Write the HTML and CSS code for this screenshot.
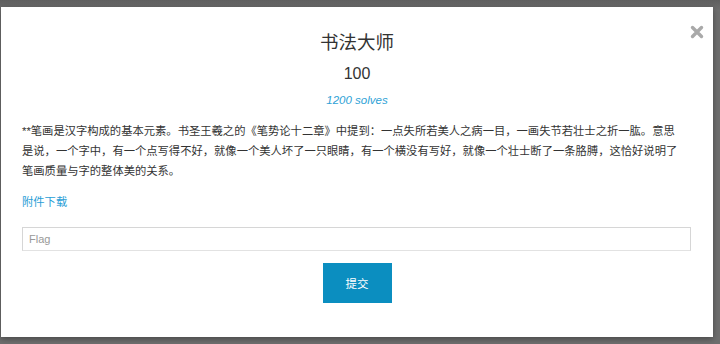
FILE: index.html
```html
<!DOCTYPE html>
<html lang="zh">
<head>
<meta charset="utf-8">
<title>书法大师</title>
<link rel="stylesheet" href="styles.css">
</head>
<body>
<div class="modal">
  <button class="close" aria-label="关闭">
    <svg width="14" height="14" viewBox="0 0 14 14"><path d="M2.5 2.5 L11.5 11.5 M11.5 2.5 L2.5 11.5" stroke="#a9a9a9" stroke-width="3.4" stroke-linecap="round"/></svg>
  </button>
  <h1 class="title">书法大师</h1>
  <div class="points">100</div>
  <div class="solves">1200 solves</div>
  <p class="desc">**笔画是汉字构成的基本元素。书圣王羲之的《笔势论十二章》中提到：一点失所若美人之病一目，一画失节若壮士之折一肱。意思是说，一个字中，有一个点写得不好，就像一个美人坏了一只眼睛，有一个横没有写好，就像一个壮士断了一条胳膊，这恰好说明了笔画质量与字的整体美的关系。</p>
  <a class="file" href="#">附件下载</a>
  <input class="flag" type="text" placeholder="Flag">
  <div class="actions"><button class="submit">提交</button></div>
</div>
</body>
</html>
```
FILE: styles.css
```css
html, body {
  margin: 0;
  padding: 0;
}
body {
  width: 720px;
  height: 344px;
  overflow: hidden;
  background: linear-gradient(#5f5f5f 0, #6e6e6e 10px, #6e6e6e 100%);
  font-family: "Liberation Sans", Arial, "Noto Sans CJK SC", sans-serif;
  color: #333;
}
.modal {
  position: relative;
  box-sizing: border-box;
  margin: 7px 0 0 1px;
  width: 712px;
  height: 330px;
  background: #fff;
  padding: 22px 21px 0 21px;
  box-shadow: 0 2px 6px rgba(0, 0, 0, .35);
  display: flex;
  flex-direction: column;
}
.close {
  position: absolute;
  top: 18px;
  right: 9px;
  border: 0;
  background: none;
  padding: 0;
  width: 14px;
  height: 14px;
  display: flex;
}
.title {
  margin: 0;
  font-weight: normal;
  font-size: 18.5px;
  line-height: 28px;
  text-align: center;
  color: #333;
}
.points {
  margin-top: 6px;
  font-size: 16px;
  line-height: 22px;
  text-align: center;
  color: #333;
}
.solves {
  margin-top: 7px;
  font-size: 11.5px;
  line-height: 16px;
  font-style: italic;
  text-align: center;
  color: #2fa2d6;
}
.desc {
  margin: 13px 0 0 0;
  padding-right: 8px;
  font-size: 11.3px;
  line-height: 20px;
  color: #333;
}
.file {
  margin-top: 11px;
  align-self: flex-start;
  font-size: 11.3px;
  line-height: 20px;
  color: #2a9ed6;
  text-decoration: none;
}
.flag {
  margin-top: 15px;
  box-sizing: border-box;
  width: 669px;
  height: 24px;
  border: 1px solid #d6d6d6;
  border-bottom-color: #e2e2e2;
  padding: 0 6px;
  font-family: "Liberation Sans", Arial, sans-serif;
  font-size: 11px;
  color: #333;
  outline: none;
}
.flag::placeholder {
  color: #999;
}
.actions {
  margin-top: 12px;
  display: flex;
  justify-content: center;
}
.submit {
  width: 69px;
  height: 40px;
  border: 0;
  background: #0b8ec0;
  color: #fff;
  font-family: "Liberation Sans", Arial, "Noto Sans CJK SC", sans-serif;
  font-size: 11.5px;
  padding: 0;
}
```
